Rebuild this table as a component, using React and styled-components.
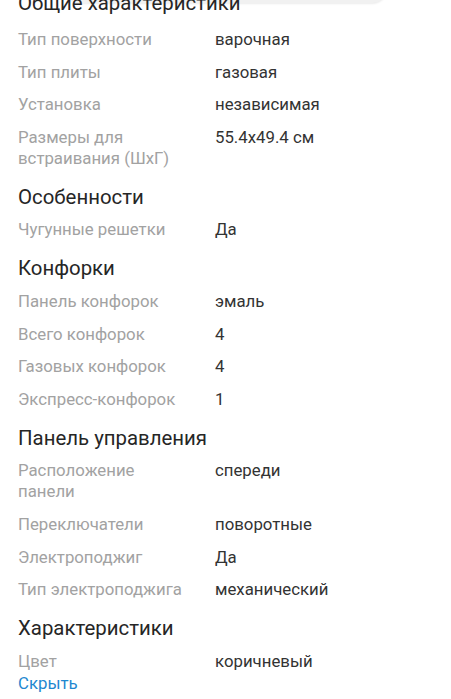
import React from "react";
import styled, { createGlobalStyle } from "styled-components";

const GlobalStyle = createGlobalStyle`
  html, body {
    margin: 0;
    padding: 0;
    background: #fff;
    overflow: hidden;
  }
  body {
    font-family: Roboto, "Noto Sans", "Liberation Sans", sans-serif;
  }
`;

const specs = [
  {
    title: "Общие характеристики",
    rows: [
      ["Тип поверхности", "варочная"],
      ["Тип плиты", "газовая"],
      ["Установка", "независимая"],
      ["Размеры для встраивания (ШхГ)", "55.4x49.4 см"],
    ],
  },
  {
    title: "Особенности",
    rows: [["Чугунные решетки", "Да"]],
  },
  {
    title: "Конфорки",
    rows: [
      ["Панель конфорок", "эмаль"],
      ["Всего конфорок", "4"],
      ["Газовых конфорок", "4"],
      ["Экспресс-конфорок", "1"],
    ],
  },
  {
    title: "Панель управления",
    rows: [
      ["Расположение панели", "спереди"],
      ["Переключатели", "поворотные"],
      ["Электроподжиг", "Да"],
      ["Тип электроподжига", "механический"],
    ],
  },
  {
    title: "Характеристики",
    rows: [["Цвет", "коричневый"]],
  },
];

const App = () => {
  return (
    <Page>
      <GlobalStyle />
      <TopPill />
      <Content>
        {specs.map((group, i) => (
          <Group key={group.title}>
            <GroupTitle $first={i === 0}>{group.title}</GroupTitle>
            {group.rows.map(([label, value]) => (
              <Row key={label}>
                <Label>{label}</Label>
                <Value>{value}</Value>
              </Row>
            ))}
          </Group>
        ))}
        <HideLink href="#">Скрыть</HideLink>
      </Content>
    </Page>
  );
};

const Page = styled.div`
  position: relative;
  width: 451px;
  height: 699px;
  overflow: hidden;
  background: #fff;
`;

const TopPill = styled.div`
  position: absolute;
  top: -30px;
  left: 65px;
  width: 323px;
  height: 33px;
  border-radius: 16px;
  background: #f1f1f1;
  box-shadow: 0 1px 2px rgba(0, 0, 0, 0.08);
`;

const Content = styled.div`
  position: relative;
  margin-top: -19px;
  padding: 0 18px;
  display: flex;
  flex-direction: column;
`;

const Group = styled.section`
  display: flex;
  flex-direction: column;
`;

const GroupTitle = styled.h3`
  margin: 0;
  padding: 10px 0 ${(p) => (p.$first ? "8.2px" : "4.7px")};
  font-size: 20.4px;
  font-weight: 400;
  line-height: 24px;
  color: #262626;
`;

const Row = styled.div`
  display: grid;
  grid-template-columns: 197px 1fr;
  padding: 5.85px 0;
  font-size: 16.8px;
  line-height: 21px;
`;

const Label = styled.span`
  color: #a2a2a2;
  padding-right: 30px;
`;

const Value = styled.span`
  color: #333;
`;

const HideLink = styled.a`
  margin-top: -5px;
  font-size: 16.8px;
  line-height: 21px;
  color: #1e88d0;
  text-decoration: none;
`;

export default App;
